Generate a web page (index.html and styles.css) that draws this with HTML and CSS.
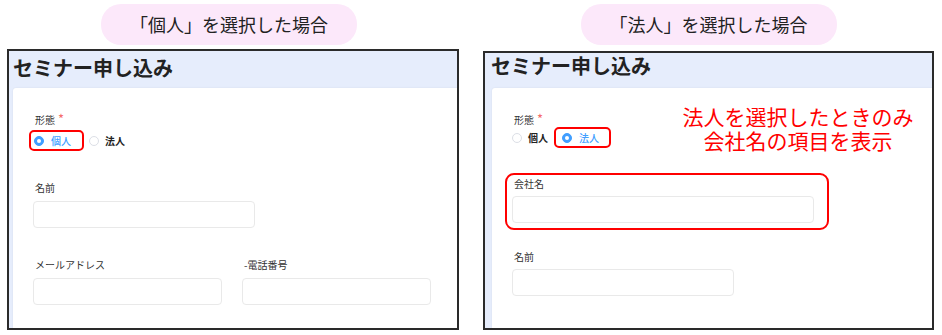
FILE: index.html
```html
<!DOCTYPE html>
<html lang="ja">
<head>
    <meta charset="UTF-8">
    <meta name="viewport" content="width=device-width, initial-scale=1.0">
    <title>セミナー申し込み</title>
    <link rel="stylesheet" href="styles.css">
</head>
<body>
    <!-- 個人を選択した場合 -->
    <div class="panel panel-person">
        <div class="pill">「個人」を選択した場合</div>
        <div class="frame">
            <div class="frame-head">セミナー申し込み</div>
            <div class="frame-body">
                <div class="card">
                    <div class="label">形態<span class="req">*</span></div>
                    <div class="choices">
                        <label class="opt checked hl"><span class="radio"></span>個人</label>
                        <label class="opt"><span class="radio"></span>法人</label>
                    </div>

                    <div class="field">
                        <div class="label">名前</div>
                        <div class="input w-name"></div>
                    </div>

                    <div class="field row">
                        <div>
                            <div class="label">メールアドレス</div>
                            <div class="input w-half"></div>
                        </div>
                        <div>
                            <div class="label">-電話番号</div>
                            <div class="input w-half"></div>
                        </div>
                    </div>
                </div>
            </div>
        </div>
    </div>

    <!-- 法人を選択した場合 -->
    <div class="panel panel-company">
        <div class="pill">「法人」を選択した場合</div>
        <div class="frame">
            <div class="frame-head">セミナー申し込み</div>
            <div class="frame-body">
                <div class="card">
                    <div class="label">形態<span class="req">*</span></div>
                    <div class="choices">
                        <label class="opt"><span class="radio"></span>個人</label>
                        <label class="opt checked hl"><span class="radio"></span>法人</label>
                    </div>

                    <div class="field hl">
                        <div class="label">会社名</div>
                        <div class="input w-company"></div>
                    </div>

                    <div class="field">
                        <div class="label">名前</div>
                        <div class="input w-name"></div>
                    </div>

                    <p class="note">法人を選択したときのみ<br>会社名の項目を表示</p>
                </div>
            </div>
        </div>
    </div>
</body>
</html>
```

FILE: styles.css
```css
body {
    margin: 0;
    padding: 0;
    background-color: #ffffff;
    font-family: "Noto Sans CJK JP", "Noto Sans", sans-serif;
    color: #222222;
    display: flex;
    align-items: flex-start;
}

.panel {
    display: flex;
    flex-direction: column;
}

.panel-person {
    margin-left: 7px;
    width: 452px;
}

.panel-company {
    margin-left: 24px;
    width: 451px;
}

/* pink caption above each screenshot */
.pill {
    align-self: center;
    margin-top: 4px;
    height: 41px;
    line-height: 41px;
    padding: 0 29px;
    border-radius: 20px;
    background-color: #fce8fa;
    font-size: 18px;
    color: #222222;
}

.panel-person .pill {
    margin-right: 8px;
}

.frame {
    box-sizing: border-box;
    border: 2px solid #2b2b2b;
    background-color: #e6edfc;
    display: flex;
    flex-direction: column;
}

.panel-person .frame {
    margin-top: 4px;
    height: 281px;
}

.panel-company .frame {
    margin-top: 6px;
    height: 279px;
}

.frame-head {
    font-size: 20px;
    font-weight: 700;
    line-height: 24px;
    color: #222222;
    padding: 5px 4px 8px;
}

.panel-company .frame-head {
    padding: 1px 6px 10px;
}

.frame-body {
    flex: 1;
    display: flex;
}

.panel-person .frame-body {
    padding-left: 4px;
}

.panel-company .frame-body {
    padding-left: 7px;
}

.card {
    flex: 1;
    position: relative;
    background-color: #ffffff;
    border-top-left-radius: 3px;
    box-shadow: 0 0 2px rgba(0, 0, 0, 0.08);
    padding: 26px 20px 0;
}

.label {
    font-size: 10px;
    line-height: 12px;
    color: #333333;
    padding-left: 2px;
}

.req {
    color: #f56c6c;
    font-size: 13px;
    line-height: 10px;
    margin-left: 3px;
    vertical-align: top;
}

/* radio buttons */
.choices {
    display: flex;
    margin-top: 4px;
    margin-left: -4px;
}

.panel-company .choices {
    margin-top: 1px;
    margin-left: -5px;
}

.opt {
    box-sizing: border-box;
    height: 21px;
    display: inline-flex;
    align-items: center;
    gap: 6px;
    padding: 0 4px 0 3px;
    border: 2px solid transparent;
    border-radius: 5px;
    font-size: 10px;
    font-weight: 700;
    color: #222222;
}

.opt.checked {
    color: #409eff;
    font-weight: 500;
    gap: 7px;
}

.opt.hl {
    border-color: #ff0000;
    padding: 0 11px 0 3px;
}

.panel-company .opt.hl {
    padding: 0 10px 0 6px;
}

.radio {
    box-sizing: border-box;
    width: 10px;
    height: 10px;
    border-radius: 50%;
    border: 1px solid #dcdfe6;
    background-color: #ffffff;
    display: flex;
    align-items: center;
    justify-content: center;
}

.opt.checked .radio {
    background-color: #409eff;
    border-color: #409eff;
}

.opt.checked .radio::after {
    content: "";
    width: 4px;
    height: 4px;
    border-radius: 50%;
    background-color: #ffffff;
}

/* text inputs */
.field {
    margin-top: 31px;
}

.field .label {
    margin-bottom: 7px;
}

.input {
    box-sizing: border-box;
    height: 27px;
    border: 1px solid #e9e9e9;
    border-radius: 4px;
    background-color: #ffffff;
}

.w-name {
    width: 222px;
}

.w-half {
    width: 189px;
}

.w-company {
    width: 302px;
}

.row {
    display: flex;
    gap: 20px;
}

.field.hl {
    width: 306px;
    margin-top: 25px;
    margin-left: -7px;
    padding: 3px 9px 5px 5px;
    border: 2px solid #ff0000;
    border-radius: 9px;
}

.field.hl .label {
    margin-bottom: 6px;
}

.field.hl + .field {
    margin-top: 21px;
}

.panel-company .field .label {
    margin-bottom: 6px;
}

/* red annotation */
.note {
    position: absolute;
    top: 16px;
    left: 186px;
    width: 240px;
    margin: 0;
    text-align: center;
    font-size: 21px;
    line-height: 24px;
    color: #ff0000;
}
```
